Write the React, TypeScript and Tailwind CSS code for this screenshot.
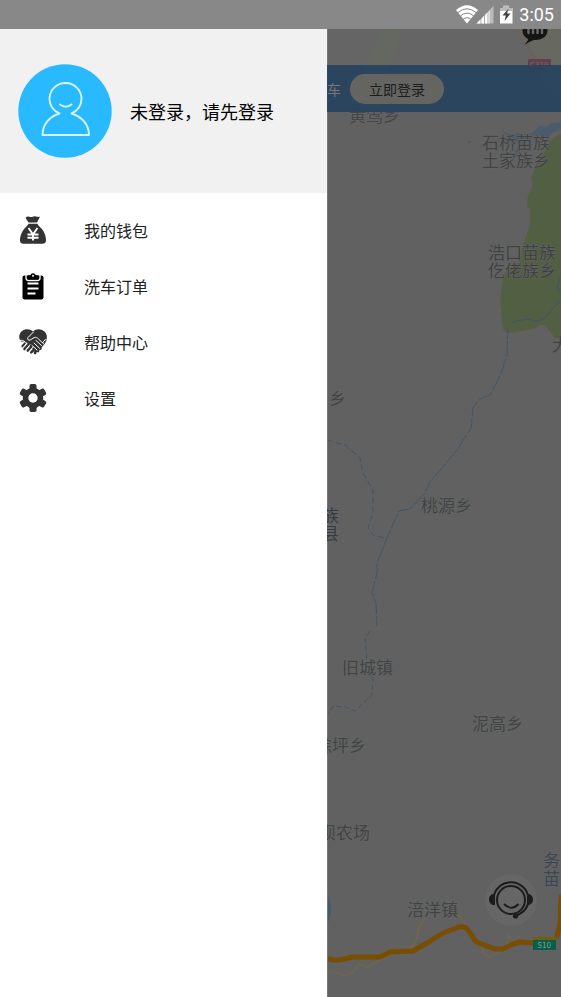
import type { ReactNode } from "react";

const menu: { label: string; href: string; icon: ReactNode }[] = [
  { label: "我的钱包", href: "#wallet", icon: <WalletIcon /> },
  { label: "洗车订单", href: "#orders", icon: <OrderIcon /> },
  { label: "帮助中心", href: "#help", icon: <HelpIcon /> },
  { label: "设置", href: "#settings", icon: <SettingsIcon /> }
];

// Map coordinates share the origin of the map pane.
const places = [
  { name: "黄莺乡", x: 22, y: 93, color: "#454747" },
  { name: "石桥苗族", x: 155, y: 120, color: "#414444" },
  { name: "土家族乡", x: 155, y: 138, color: "#414444" },
  { name: "浩口苗族", x: 161, y: 230, color: "#3e4240" },
  { name: "仡佬族乡", x: 161, y: 248, color: "#3e4240" },
  { name: "大", x: 225, y: 322, color: "#3e4240" },
  { name: "乡", x: 2, y: 376, color: "#414444" },
  { name: "族", x: -5, y: 493, color: "#343b47" },
  { name: "县", x: -5, y: 511, color: "#343b47" },
  { name: "桃源乡", x: 94, y: 483, color: "#414444" },
  { name: "旧城镇", x: 15, y: 645, color: "#414444" },
  { name: "泥高乡", x: 145, y: 701, color: "#414444" },
  { name: "综坪乡", x: -12, y: 723, color: "#414444" },
  { name: "坝农场", x: -8, y: 810, color: "#414444" },
  { name: "务", x: 216, y: 838, color: "#3b4554" },
  { name: "苗", x: 216, y: 856, color: "#3b4554" },
  { name: "涪洋镇", x: 80, y: 887, color: "#414444" }
];

function WalletIcon() {
  return (
    <svg viewBox="0 0 28 28" className="size-7 shrink-0" fill="#333" aria-hidden="true">
      <path d="M6.500 1.800C8.500-.3 10 .6 11.500 1c1.500.5 2.500-1 4.500-.8 1.800.1 2.500 1 5 .6L18 6.500H9.500z" />
      <path d="M9.500 7.700h8.800c1.300 2.500 3.800 3.800 5.700 6.800 2 3.200 3.200 7 3 10.300-.1 2-1.500 3-3.500 3h-19c-2 0-3.400-1-3.500-3-.2-3.300 1-7.100 3-10.300 1.900-3 4.200-4.300 5.500-6.800z" />
      <path d="m9.500 12 4.500 6.300 4.500-6.300M8.500 18.500h11M8.500 21.800h11M14 18.500v6" fill="none" stroke="#fff" strokeWidth="1.900" />
    </svg>
  );
}

function OrderIcon() {
  return (
    <svg viewBox="0 0 28 28" className="size-7 shrink-0" aria-hidden="true">
      <rect x="3.500" y="3.500" width="21" height="24" rx="2" fill="#000" />
      <path d="M7 2.500v3.500q0 2.500 2.500 2.500h9q2.500 0 2.500-2.500V2.500" fill="none" stroke="#fff" strokeWidth="1.300" />
      <path d="M8.500 6.500V4.300q0-1 1-1h1.800a2.800 2.800 0 0 1 5.400 0h1.800q1 0 1 1v2.200q0 1-1 1h-9q-1 0-1-1z" fill="#000" />
      <circle cx="14" cy="3.800" r="1" fill="#fff" />
      <path d="M8.500 11.500h11M8.500 16.500h11M8.500 21.500h8" stroke="#fff" strokeWidth="1.800" />
    </svg>
  );
}

function HelpIcon() {
  return (
    <svg viewBox="0 0 28 28" className="size-7 shrink-0" fill="#333" aria-hidden="true">
      <path d="M14 3.500C11 .5 6 .5 3 3c-3.400 3-3.600 7.500-1 10.800 2.500-.8 4 .5 5.500 2.200l8 6.500 3.500 1.500 6.500-8c3-3.500 3.500-9.500-.3-12.700C22 .5 17 .5 14 3.500z" />
      <g fill="none" stroke="#333" strokeWidth="2.600" strokeLinecap="round">
        <path d="m6.300 15.500-2.600 2.700M9.500 17l-4 4M12.500 19l-3.700 3.500M15.200 21.300l-3 3M17 22.500l-1 2.500M17 21l2 2M19 18.500l2.500 2" />
      </g>
      <g fill="none" stroke="#fff" strokeWidth="1" strokeLinecap="round" strokeLinejoin="round">
        <path d="m14.500 4-5.500 5.500c-1.200 1.500.5 3.500 2.200 2.500l4-2.500c2-.6 3.200.4 4.500 1.700l4.800 4.500" />
        <path d="M.8 12.500c2-.8 4 .2 5.400 1.700l2 1.300M17 12.500l5.500 5M15 15l5.500 5.200M13 17.500l5 4.500" />
        <path d="m7.500 15.300-3.200 3.900M11 16.800l-4 4.500M13.800 19.300l-3.300 3.800" />
        <path d="M27 11.500c-2 .5-2.500 2-3 3" />
      </g>
    </svg>
  );
}

function SettingsIcon() {
  return (
    <svg viewBox="0 0 28 28" className="size-7 shrink-0" fill="#333" aria-hidden="true">
      <circle cx="14" cy="14" r="10.300" />
      <rect x="10.500" width="7" height="28" rx="1.800" />
      <rect x="10.500" width="7" height="28" rx="1.800" transform="rotate(60 14 14)" />
      <rect x="10.500" width="7" height="28" rx="1.800" transform="rotate(120 14 14)" />
      <circle cx="14" cy="14" r="4.700" fill="#fff" />
    </svg>
  );
}

function Avatar() {
  return (
    <svg viewBox="0 0 94 94" className="size-[94px] shrink-0" aria-hidden="true">
      <circle cx="47" cy="47" r="46.700" fill="#29b9ff" />
      <g fill="none" stroke="#d9f3ff" strokeWidth="1.900" strokeLinecap="round" strokeLinejoin="round">
        <path d="M41.500 49.500C35 47 31.500 41 31.500 35a16 16 0 0 1 32 0c0 6-3.500 12-10 14.500 10 3 17.500 11 17.500 21.500H24.500c0-10.500 7-18.500 17-21.500" />
        <path d="M42 40.500q5.500 4.500 11.500 0" />
      </g>
    </svg>
  );
}

function StatusBar() {
  return (
    <header className="flex h-[29px] items-center justify-end gap-[5px] bg-[#888] pr-[7px] text-white">
      <svg viewBox="0 0 58 20" className="h-5 w-[58px]" aria-hidden="true">
        <path d="M0 5Q11 -4.500 22 5L11 18.500z" fill="#fff" />
        <path d="M2 7.500Q11 0 20 7.500M4.500 10.800Q11 5.500 17.500 10.800M7.200 14Q11 11 14.800 14" fill="none" stroke="#888" strokeWidth="1" />
        <path d="M20.500 18.500 37.500 1v17.500z" fill="#bbb" />
        <path d="M20.500 18.500 33.500 5.500v13z" fill="#fff" />
        <path d="M25 13v7M28.500 10v10M32 6v14" stroke="#888" strokeWidth=".7" />
        <path d="M44 3h3.500V.8h5V3h4v15.500H44z" fill="#fff" />
        <path d="M44 3h3.500V.8h5V3h4v3H44z" fill="#bbb" />
        <path d="m52.500 3.500-6 7h3.300l-1.300 5.500 6-7.500h-3.400z" fill="#444" />
      </svg>
      <span className="font-['Roboto',sans-serif] text-lg">3:05</span>
    </header>
  );
}

function Drawer() {
  return (
    <aside className="flex w-[58.3%] shrink-0 flex-col bg-white">
      <a href="#login" className="flex h-[164px] items-center gap-[18px] bg-[#f1f1f1] pl-[18px] text-lg text-black">
        <Avatar />
        未登录，请先登录
      </a>
      <nav className="flex flex-col pt-[9px]">
        {menu.map((item) => (
          <a key={item.href} href={item.href} className="flex h-14 items-center gap-[37px] pl-[19px] text-base text-[#222]">
            {item.icon}
            {item.label}
          </a>
        ))}
      </nav>
    </aside>
  );
}

function MapCanvas() {
  return (
    <svg viewBox="0 0 234 968" preserveAspectRatio="xMinYMin slice" className="absolute inset-0 size-full" role="img" aria-label="地图">
      <rect width="234" height="968" fill="#616161" />
      <rect width="234" height="36" fill="#656565" />
      <path d="M54 0h24C64 24 61 48 56 78H31C36 45 44 20 54 0z" fill="#636860" />
      <path d="M190 0h44v68c-14-4-18-18-24-27-6-13-8-28-20-40z" fill="#676960" />
      <path d="M188 0c15 12 18 30 26 44 5 10 10 16 20 20" fill="none" stroke="#6b625b" strokeWidth="3" />
      <path d="M175 101l6 4h7l3-1 6 2 8-2 8-7 6 1 6-4h6l3-2v8l-9 4-6 7-5-5-9 3-3 5-5-2-4 5-3 9-3 1 5-13-8-3z" fill="#4a5b6a" />
      <path d="M234 104l-11 8-6 12-8 12-5 13 2 7-5 10-1 12 3 1v17l-8 23-2 14c-8 3-15 8-17 16l-3 24 3 26q2 5 5 5l25-4 7-4h5l10 13h6z" fill="#525f43" />
      <g fill="none" stroke="#3f5567" strokeWidth="1">
        <path d="M185 293l15-3 8 2c8 0 11-5 15-9l11-12M234 248c-4 5-4 12 0 18M141 113h3" />
        <path d="M181 299l-1 27-4 13-6 14-7 13-8 3c-5 3-7 7-9 10l-2 20-4 6-10 16-10 12-17 20-5 11-15 16-11 2-12 27-10 25v10l-5 20 4 10 1 24" strokeDasharray="11 2 4 1" />
        <path d="M0 411l18 5 15 13 3 15 10 17v23l-5 15 6 8 13 2" strokeDasharray="6 3" />
        <path d="M43 602l-5 8 2 21M46 648l-1 18-17 16-10-4-12-1-6 9" strokeDasharray="5 3" />
      </g>
      <g fill="none" strokeLinecap="round" strokeLinejoin="round">
        <path d="M-2 943h10l10 4 8-4 6-8 8 3 10-5 13-7 16-6 7-3 4-8 1-8 7-12M118 873h6l7 12 9 13M155 914l1 10 7 4 9-5 8-5 1-12 5 7" stroke="#6f654f" strokeWidth="2" />
        <path d="M-2 929l8 2h7l13-3h27l10-5 23-1 14-8 16-10 16-6q6-1 8 2l4 5c3 5 4 8 8 9l16 6h8l10-5 7-2 13 1M230 907l3-11 1-28" stroke="#794d02" strokeWidth="5" />
      </g>
      <circle cx="-24" cy="880" r="28" fill="#405b70" />
      <rect width="1" height="968" fill="#777" />

      {places.map((place) => (
        <text key={place.name} x={place.x} y={place.y} fontSize="17" fill={place.color} stroke="#666" strokeWidth="1" paintOrder="stroke">
          {place.name}
        </text>
      ))}
      <rect x="206" y="908" width="23" height="3" fill="#765d0b" />
      <rect x="206" y="911" width="23" height="10" fill="#075f4b" />
      <text x="217" y="919" fontSize="8" textAnchor="middle" fill="#899b94">S10</text>
      <rect x="201" y="30" width="23" height="13" rx="1" fill="#623f4c" />
      <text x="212" y="39" fontSize="8" textAnchor="middle" fill="#7b626b">G319</text>
    </svg>
  );
}

function MessageIcon() {
  return (
    <svg viewBox="0 0 26 24" className="h-6 w-[26px]" aria-hidden="true">
      <path d="M25.500 9.500c0 5-4.500 9.500-12.500 9.500-2 0-4 1-11 5 3-3 4-4.500 4-6-3-2-5.500-4.500-5.500-8.500C.5 4 5 0 13 0s12.500 4 12.500 9.500z" fill="#151515" />
      <path d="M6.500 8v4M11 8v4M15.500 8v4M20 8v4" stroke="#686868" strokeWidth="2.400" strokeLinecap="round" />
    </svg>
  );
}

function SupportIcon() {
  return (
    <svg viewBox="0 0 52 52" className="size-[52px]" fill="none" stroke="#1c1c1c" aria-hidden="true">
      <circle cx="26" cy="26" r="14" strokeWidth="2" />
      <path d="M8.500 24a17.600 17.600 0 0 1 35 0c.5 8-4 15-13 17.500" strokeWidth="2" />
      <path d="M10 20c-8-1-8 12 0 11zM42 20c8-1 8 12 0 11z" fill="#1c1c1c" strokeWidth="0" />
      <circle cx="30.500" cy="42" r="2.600" fill="#1c1c1c" strokeWidth="0" />
      <path d="M19 30q7.500 7.500 14.500 0" strokeWidth="1.900" />
    </svg>
  );
}

function MapPane() {
  return (
    <main className="relative flex min-w-0 flex-1 flex-col overflow-hidden">
      <MapCanvas />
      <div className="relative flex h-9 justify-end overflow-hidden pr-[13px]">
        <button type="button" aria-label="消息" className="-mt-2 h-6">
          <MessageIcon />
        </button>
      </div>
      <div className="relative flex h-[47px] items-center gap-[9px] bg-[#27425f]/90 text-sm">
        <span className="text-[#777]">车</span>
        <button type="button" className="h-[30px] rounded-full bg-[#646561] px-[19px] text-[#1c1c1c]">
          立即登录
        </button>
      </div>
      <button type="button" aria-label="客服" className="absolute right-6 bottom-[71px] rounded-full bg-[#666]">
        <SupportIcon />
      </button>
    </main>
  );
}

export default function App() {
  return (
    <div className="flex min-h-screen flex-col bg-[#616161] font-['Noto_Sans_CJK_SC',sans-serif]">
      <StatusBar />
      <div className="flex flex-1">
        <Drawer />
        <MapPane />
      </div>
    </div>
  );
}
